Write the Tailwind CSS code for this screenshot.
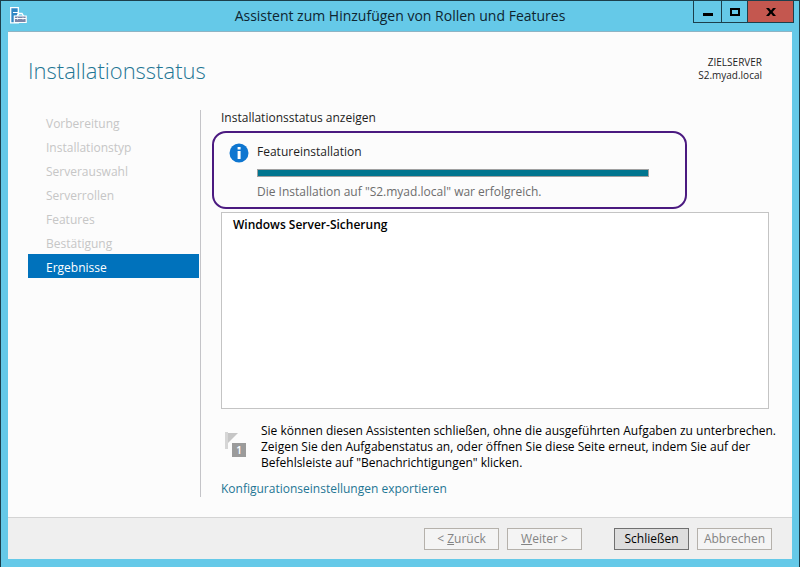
<!DOCTYPE html>
<html lang="de">
<head>
    <meta charset="UTF-8">
    <meta name="viewport" content="width=device-width, initial-scale=1.0">
    <title>Assistent zum Hinzufügen von Rollen und Features</title>
    <script src="https://cdn.jsdelivr.net/npm/@tailwindcss/browser@4"></script>
</head>
<body class="bg-[#65c9e8] font-['Open_Sans','Noto_Sans',sans-serif] text-xs text-[#1e1e1e]">
  <div class="flex flex-col min-h-screen border border-[#1c3f4c] px-[7px] pb-2">

    <!-- title bar -->
    <header class="relative flex h-[30px] shrink-0 items-center justify-center">
      <svg class="absolute left-[2px] top-[6px]" width="17" height="17" viewBox="0 0 17 17" aria-hidden="true">
        <path d="M.7.7h7.600v15.100H.7z" fill="#2f86c4" stroke="#fff" stroke-width="1.300"/>
        <path d="M3 5.500h5" stroke="#fff" stroke-width="1"/>
        <path d="M4 8.500h12.500v7.500H4z" fill="#65c9e8"/>
        <path d="M7 9l1.500-2.500h3.500L13.500 9" fill="none" stroke="#fff" stroke-width="1.300"/>
        <path d="M4.300 9h11.900v6.500H4.300z" fill="#7b86a8" stroke="#fff" stroke-width="1.200"/>
        <path d="M4.500 11.500h11.500M7.500 10.500v2M13 10.500v2" stroke="#fff" stroke-width="1"/>
      </svg>
      <h1 class="text-sm text-[#0e2530]">Assistent zum Hinzufügen von Rollen und Features</h1>
      <div class="absolute -top-px -right-[2px] flex h-[23px] border border-[#1c3f4c]">
        <button class="flex w-[27px] items-center justify-center" aria-label="Minimieren">
          <svg width="10" height="10" viewBox="0 0 10 10"><path d="M0 6h10v3H0z" fill="#000"/></svg>
        </button>
        <button class="flex w-[26px] items-center justify-center border-l border-[#1c3f4c]" aria-label="Maximieren">
          <svg width="10" height="8" viewBox="0 0 10 8"><path d="M1 1h8v6H1z" fill="none" stroke="#000" stroke-width="2"/></svg>
        </button>
        <button class="flex w-[46px] items-center justify-center border-l border-[#1c3f4c] bg-[#c4574f]" aria-label="Fenster schließen">
          <svg width="10" height="8" viewBox="0 0 10 8"><path d="M0 0h3l2 2.500L7 0h3L6.600 4 10 8H7L5 5.500 3 8H0l3.400-4z" fill="#000"/></svg>
        </button>
      </div>
    </header>

    <main class="flex grow flex-col bg-[#fcfcfc] border-t border-[#8fb4c4] pl-5 pr-[23px] pb-5">
      <div class="flex h-[78px] shrink-0 items-center justify-between">
        <h2 class="text-[22px] font-light text-[#1f7694]">Installationsstatus</h2>
        <div class="pr-[7px] pb-1 text-right text-[10px] leading-[13px]">
          <p>ZIELSERVER</p>
          <p>S2.myad.local</p>
        </div>
      </div>

      <div class="flex grow">
        <!-- steps -->
        <nav class="w-[173px] shrink-0 border-r border-[#c4c4c8] pr-px">
          <ul class="leading-5 text-[#c6c6c6]">
            <li><a href="#" class="block pt-1 pl-[18px]">Vorbereitung</a></li>
            <li><a href="#" class="block pt-1 pl-[18px]">Installationstyp</a></li>
            <li><a href="#" class="block pt-1 pl-[18px]">Serverauswahl</a></li>
            <li><a href="#" class="block pt-1 pl-[18px]">Serverrollen</a></li>
            <li><a href="#" class="block pt-1 pl-[18px]">Features</a></li>
            <li><a href="#" class="block pt-1 pl-[18px]">Bestätigung</a></li>
            <li><a href="#" class="block pt-1 pl-[18px] bg-[#0072bc] text-white" aria-current="step">Ergebnisse</a></li>
          </ul>
        </nav>

        <section class="flex min-w-0 grow flex-col pl-5">
          <p class="leading-4">Installationsstatus anzeigen</p>

          <div class="-ml-[9px] mt-[5px] mr-[82px] flex h-[78px] gap-2 rounded-[14px] border-2 border-[#4b1a80] pl-[15px] pt-[10px]">
            <svg class="shrink-0" width="20" height="20" viewBox="0 0 20 20" aria-hidden="true">
              <circle cx="10" cy="10" r="9.500" fill="#0e76d0"/>
              <path d="M8.600 4h3v2.500h-3zM8.600 8h3v8h-3z" fill="#fff"/>
            </svg>
            <div class="grow pr-9">
              <label for="progress" class="block pt-px leading-4">Featureinstallation</label>
              <progress id="progress" value="100" max="100" class="mt-[9px] block h-2 w-full appearance-none border border-[#a0a0a0] [&::-webkit-progress-bar]:bg-[#e6e6e6] [&::-webkit-progress-value]:bg-[#00758f]">100%</progress>
              <p class="mt-[7px] leading-4 text-[#6d6d6d]">Die Installation auf "S2.myad.local" war erfolgreich.</p>
            </div>
          </div>

          <ul class="mt-[3px] min-h-[197px] grow border border-[#c4c4c4] bg-white px-[11px] py-1">
            <li class="leading-4 font-semibold text-black">Windows Server-Sicherung</li>
          </ul>

          <div class="mt-[14px] -mr-5 flex gap-[14px]">
            <svg class="ml-1 mt-2 shrink-0" width="22" height="29" viewBox="0 0 22 29" aria-hidden="true">
              <path d="M0 1h3v17H0z" fill="#d6d6d6"/>
              <path d="M3 2h10L3 12z" fill="#c6c6c6"/>
              <path d="M7 12h14v14H7z" fill="#9b9b9b"/>
              <text x="14" y="23" text-anchor="middle" font-size="10" font-weight="600" fill="#fff">1</text>
            </svg>
            <p class="leading-4 text-black">Sie können diesen Assistenten schließen, ohne die ausgeführten Aufgaben zu unterbrechen.<br>Zeigen Sie den Aufgabenstatus an, oder öffnen Sie diese Seite erneut, indem Sie auf der<br>Befehlsleiste auf "Benachrichtigungen" klicken.</p>
          </div>

          <a href="#" class="mt-[10px] self-start leading-4 text-[#1f7694]">Konfigurationseinstellungen exportieren</a>
        </section>
      </div>
    </main>

    <!-- buttons -->
    <footer class="flex h-[42px] shrink-0 items-center justify-end gap-2 border-t border-[#d4d4d4] bg-[#efefef] pr-5">
      <button class="h-[22px] w-[75px] border border-[#b5b1ab] bg-[#f4f4f4] text-[#838383]" disabled>&lt; <u>Z</u>urück</button>
      <button class="h-[22px] w-[75px] border border-[#b5b1ab] bg-[#f4f4f4] text-[#838383]" disabled><u>W</u>eiter &gt;</button>
      <button class="ml-6 h-[22px] w-[75px] border border-[#707070] bg-[#dddddd] text-black">Schließen</button>
      <button class="h-[22px] w-[75px] border border-[#b5b1ab] bg-[#f4f4f4] text-[#838383]" disabled>Abbrechen</button>
    </footer>
  </div>
</body>
</html>
